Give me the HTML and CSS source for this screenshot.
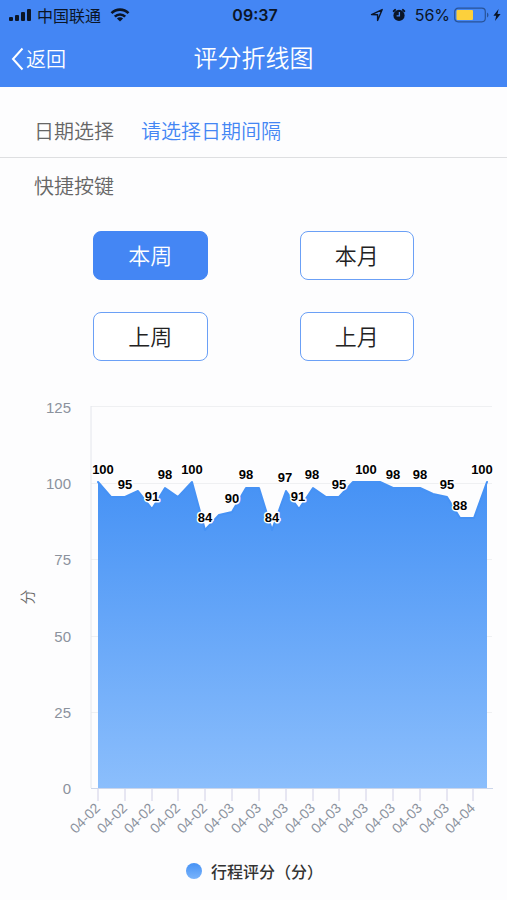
FILE: index.html
```html
<!DOCTYPE html>
<html lang="zh-CN">
<head>
<meta charset="utf-8">
<meta name="viewport" content="width=device-width, initial-scale=1">
<title>评分折线图</title>
<link rel="stylesheet" href="styles.css">
</head>
<body>
<header class="header">
  <div class="status">
    <div class="status-side">
      <svg class="signal" width="24" height="14" viewBox="0 0 24 14" aria-hidden="true">
        <rect x="0" y="9" width="4" height="4" rx="1"/>
        <rect x="6" y="7" width="4" height="6" rx="1"/>
        <rect x="12" y="4" width="4" height="9" rx="1"/>
        <rect x="18" y="1" width="4" height="12" rx="1"/>
      </svg>
      <span class="carrier">中国联通</span>
      <svg class="wifi" width="20" height="14" viewBox="0 0 20 14" aria-hidden="true">
        <path d="M1.5 5.2a12 12 0 0 1 17 0M4.8 8.6a7.4 7.4 0 0 1 10.4 0" fill="none" stroke="#0b1526" stroke-width="2.6"/>
        <path d="M10 13.6l-3.1-3.1a4.4 4.4 0 0 1 6.2 0z"/>
      </svg>
    </div>
    <span class="clock">09:37</span>
    <div class="status-side status-right">
      <svg width="14" height="14" viewBox="0 0 14 14" aria-hidden="true">
        <path d="M1.5 6.6L12.2 1.6 7.6 12.4V6.8z" fill="none" stroke="#0b1526" stroke-width="1.4" stroke-linejoin="round"/>
      </svg>
      <svg class="alarm" width="14" height="14" viewBox="0 0 14 14" aria-hidden="true">
        <circle cx="7" cy="7.4" r="5.6"/>
        <path d="M1.6 3.2L3.2 1.8M12.4 3.2L10.8 1.8" stroke="#0b1526" stroke-width="1.8" stroke-linecap="round"/>
        <path d="M7.4 4v3.800H4.6" fill="none" stroke="#4486f4" stroke-width="1.3"/>
      </svg>
      <span class="percent">56%</span>
      <svg class="battery" width="37" height="16" viewBox="0 0 37 16" aria-hidden="true">
        <rect x="0.7" y="1.2" width="30.6" height="13.6" rx="3.5" fill="none" stroke="#285397" stroke-width="1.2"/>
        <rect x="2.5" y="3" width="16.5" height="10" rx="1" fill="#fcd03c"/>
        <path d="M33 5.4a3 3 0 0 1 0 5.2z" fill="#285397"/>
      </svg>
      <svg width="8" height="12" viewBox="0 0 8 12" aria-hidden="true">
        <path d="M5.6 0L0.4 6.8h2.8L2 12l5.6-7H4.5z"/>
      </svg>
    </div>
  </div>
  <nav class="navbar">
    <a class="back" href="#">
      <svg width="14" height="24" viewBox="0 0 14 24" aria-hidden="true"><path d="M11.500 1.500L2 12l9.500 10.500" fill="none" stroke="#fff" stroke-width="2"/></svg>
      <span>返回</span>
    </a>
    <h1 class="title">评分折线图</h1>
  </nav>
</header>
<main>
  <div class="date-row">
    <span>日期选择</span>
    <a class="date-link" href="#">请选择日期间隔</a>
  </div>
  <section class="quick">
    <h2 class="quick-title">快捷按键</h2>
    <div class="quick-grid">
      <button class="btn active" type="button">本周</button>
      <button class="btn" type="button">本月</button>
      <button class="btn" type="button">上周</button>
      <button class="btn" type="button">上月</button>
    </div>
  </section>
  <figure class="chart">
    <svg class="plot" viewBox="0 390 507 460" role="img" aria-label="行程评分（分）">
      <defs>
        <linearGradient id="fill" x1="0" y1="0" x2="0" y2="1">
          <stop offset="0" stop-color="#4692f5"/>
          <stop offset="1" stop-color="#8bbefc"/>
        </linearGradient>
      </defs>
      <path class="grid" d="M91 406.500H492M91 483.500H492M91 559.500H492M91 636.500H492M91 712.500H492"/>
      <path class="axis" d="M91 406V788"/>
      <path d="M98 788V482L111 497 125 497 138 491 152 509 165 488 178 497 192 482 205 530 219 515 232 512 246 488 259 488 272 530 286 491 299 509 313 488 326 497 339 497 353 482 366 482 380 482 393 488 406 488 420 488 433 494 447 497 460 518 474 518 487 482V788Z" fill="url(#fill)"/>
      <path class="line" d="M98 482L111 497 125 497 138 491 152 509 165 488 178 497 192 482 205 530 219 515 232 512 246 488 259 488 272 530 286 491 299 509 313 488 326 497 339 497 353 482 366 482 380 482 393 488 406 488 420 488 433 494 447 497 460 518 474 518 487 482"/>
      <path class="base" d="M91 788.500H493"/>
      <path class="tick" d="M98 789v12M125 789v12M152 789v12M178 789v12M205 789v12M232 789v12M259 789v12M286 789v12M313 789v12M339 789v12M366 789v12M393 789v12M420 789v12M447 789v12M473 789v12"/>
      <g class="ylabel">
        <text x="71" y="413">125</text>
        <text x="71" y="489">100</text>
        <text x="71" y="565">75</text>
        <text x="71" y="642">50</text>
        <text x="71" y="718">25</text>
        <text x="71" y="794">0</text>
      </g>
      <text class="unit" transform="translate(33 597) rotate(-90)">分</text>
      <g class="value">
        <text x="103" y="474">100</text>
        <text x="125" y="489">95</text>
        <text x="152" y="501">91</text>
        <text x="165" y="479">98</text>
        <text x="192" y="474">100</text>
        <text x="205" y="522">84</text>
        <text x="232" y="503">90</text>
        <text x="246" y="479">98</text>
        <text x="272" y="522">84</text>
        <text x="285" y="482">97</text>
        <text x="298" y="501">91</text>
        <text x="312" y="479">98</text>
        <text x="339" y="489">95</text>
        <text x="366" y="474">100</text>
        <text x="393" y="479">98</text>
        <text x="420" y="479">98</text>
        <text x="447" y="489">95</text>
        <text x="460" y="510">88</text>
        <text x="482" y="474">100</text>
      </g>
      <g class="xlabel">
        <text transform="translate(101 809) rotate(-45)">04-02</text>
        <text transform="translate(128 809) rotate(-45)">04-02</text>
        <text transform="translate(155 809) rotate(-45)">04-02</text>
        <text transform="translate(181 809) rotate(-45)">04-02</text>
        <text transform="translate(208 809) rotate(-45)">04-02</text>
        <text transform="translate(235 809) rotate(-45)">04-03</text>
        <text transform="translate(262 809) rotate(-45)">04-03</text>
        <text transform="translate(289 809) rotate(-45)">04-03</text>
        <text transform="translate(316 809) rotate(-45)">04-03</text>
        <text transform="translate(342 809) rotate(-45)">04-03</text>
        <text transform="translate(369 809) rotate(-45)">04-03</text>
        <text transform="translate(396 809) rotate(-45)">04-03</text>
        <text transform="translate(423 809) rotate(-45)">04-03</text>
        <text transform="translate(450 809) rotate(-45)">04-03</text>
        <text transform="translate(476 809) rotate(-45)">04-04</text>
      </g>
    </svg>
    <figcaption class="legend"><span class="dot"></span>行程评分（分）</figcaption>
  </figure>
</main>
</body>
</html>
```
FILE: styles.css
```css
* { box-sizing: border-box; }
body {
  margin: 0;
  background: #fdfdfe;
  color: #666;
  font-family: "Liberation Sans", "Noto Sans CJK SC", sans-serif;
  font-size: 20px;
  font-weight: 350;
}
a { color: inherit; text-decoration: none; }
svg { display: block; }

.header { background: #4486f4; color: #fff; }
.status {
  display: flex;
  align-items: center;
  height: 30px;
  padding: 0 6px 0 9px;
  color: #0b1526;
  font-size: 16px;
  font-weight: 400;
}
.status svg { fill: #0b1526; flex: none; }
.status-side { display: flex; flex: 1; align-items: center; }
.status-right { justify-content: flex-end; }
.carrier { margin: 0 9px 0 4px; }
.clock { font-family: Inter, sans-serif; font-weight: 600; }
.alarm { margin: 0 9px 0 8px; }
.percent { margin-right: 4px; font-family: Inter, sans-serif; }
.battery { margin-right: 2px; }

.navbar {
  display: grid;
  grid-template-columns: 1fr auto 1fr;
  align-items: center;
  height: 57px;
  padding: 0 11px;
}
.back { display: flex; align-items: center; gap: 1px; }
.title { margin: 0; padding-bottom: 4px; font-size: 24px; font-weight: 350; }

.date-row {
  display: flex;
  align-items: center;
  gap: 27px;
  height: 71px;
  padding: 16px 34px 0;
  border-bottom: 1px solid #dedfe1;
}
.date-link { color: #4486f4; }
.quick-title {
  margin: 0;
  padding: 14px 34px 0;
  font-size: 20px;
  font-weight: 350;
  line-height: 30px;
}
.quick-grid {
  display: grid;
  grid-template-columns: 1fr 1fr;
  gap: 32px 92px;
  padding: 29px 93px;
}
.btn {
  height: 49px;
  padding: 0 0 4px;
  border: 1px solid #6ba0f6;
  border-radius: 8px;
  background: #fff;
  color: #222;
  font: inherit;
  font-size: 22px;
}
.btn.active { background: #4486f4; border-color: #4486f4; color: #fff; }

.chart { margin: 0; padding-bottom: 16px; }
.plot { width: 100%; height: auto; }
.grid { stroke: #eff0f2; }
.axis { stroke: #e4e6ec; }
.base { stroke: #ccd6eb; }
.tick { stroke: #d0cfe6; }
.line { fill: none; stroke: #4692f5; stroke-width: 2; stroke-linejoin: round; stroke-linecap: round; }
.ylabel { fill: #8b929d; font-size: 15px; font-weight: 400; text-anchor: end; }
.xlabel { fill: #8b929d; font-size: 14px; font-weight: 400; text-anchor: end; }
.unit { fill: #666; font-size: 15px; font-weight: 350; text-anchor: middle; }
.value {
  fill: #000;
  stroke: #fff;
  stroke-width: 3px;
  stroke-linejoin: round;
  paint-order: stroke;
  font-size: 13px;
  font-weight: 700;
  text-anchor: middle;
}
.legend {
  display: flex;
  align-items: center;
  justify-content: center;
  gap: 9px;
  height: 42px;
  padding-left: 2px;
  color: #333;
  font-size: 16px;
  font-weight: 500;
}
.dot {
  width: 16px;
  height: 16px;
  border-radius: 50%;
  background: linear-gradient(#4692f5, #7ab4fb);
}
```
